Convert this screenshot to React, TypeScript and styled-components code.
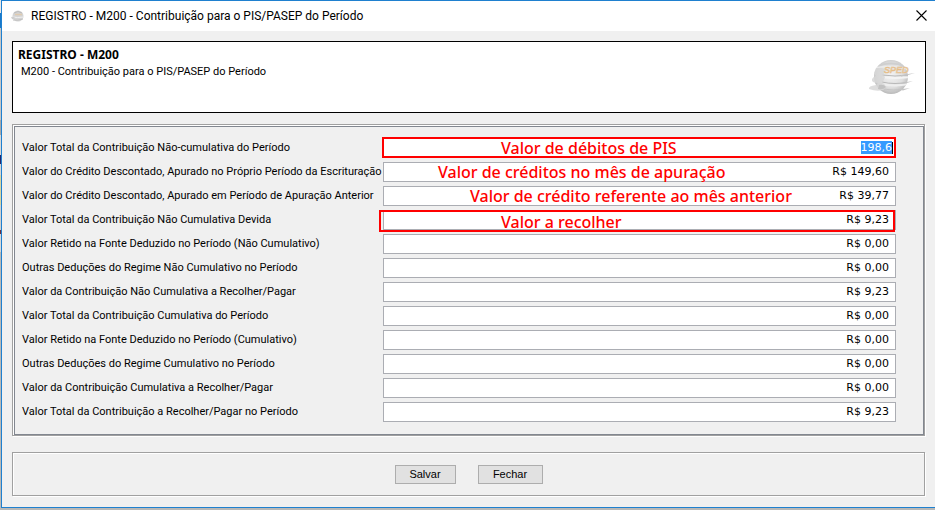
import React, { useEffect, useRef } from 'react';
import styled, { createGlobalStyle, css } from 'styled-components';

const GlobalStyle = createGlobalStyle`
  * { box-sizing: border-box; }
  body {
    margin: 0;
    background: #b9b9b7;
    font-family: Roboto, Arial, sans-serif;
    font-size: 11px;
    color: #000;
  }
`;

const Desktop = styled.div`
  padding: 0 0 2px 1px;
  background: linear-gradient(
      #e8e8e8 0 13px, #1979ca 13px 28px, #c6c6c6 28px 120px, #a8a8a8 120px 135px,
      #d8d8d8 135px 155px, #26276b 155px 164px, #d6d6d6 164px 175px, #d9d5a0 175px 205px,
      #d0d0d0 205px 230px, #6b3040 230px 234px, #d8d8d8 234px 252px, #b9b9b7 252px
    ) left top / 1px 100% no-repeat;
`;

const Window = styled.main`
  border: solid #1f80cf;
  border-width: 1px 0 1px 1px;
  background: #f0f0f0;
`;

const TitleBar = styled.header`
  display: flex;
  align-items: center;
  height: 30px;
  padding: 0 8px 1px;
  background: #fff;
`;

const Title = styled.h1`
  flex: 1;
  margin: 0 0 0 6px;
  font: 12px/16px Roboto, "Segoe UI", sans-serif;
`;

const CloseButton = styled.button`
  display: flex;
  padding: 0;
  border: 0;
  background: none;
`;

const Content = styled.div`
  display: flex;
  flex-direction: column;
  padding: 10px 9px 11px 10px;
`;

const Banner = styled.section`
  display: flex;
  justify-content: space-between;
  height: 72px;
  padding: 4px 9px 0 5px;
  border: 1px solid #000;
  background: #fff;
`;

const BannerTitle = styled.h2`
  margin: 0;
  font: bold 12px/17px "Noto Sans", Tahoma, sans-serif;
`;

const BannerText = styled.p`
  margin: 0 0 0 3px;
  line-height: 17px;
`;

const BannerLogo = styled.div`
  padding-top: 12px;
`;

const etched = css`
  margin-right: 1px;
  border: 1px solid #a0a0a0;
  box-shadow: 1px 1px 0 #fff, inset 1px 1px 0 #fff;
`;

const FormPanel = styled.section`
  ${etched}
  margin-top: 11px;
  padding: 1px 0 0 1px;
`;

const FormBody = styled.form`
  display: flex;
  flex-direction: column;
  gap: 4px;
  padding: 11px 27px 12px 7px;
  border: 1px solid #828790;
`;

const Row = styled.div`
  display: grid;
  grid-template-columns: 361px 1fr;
  align-items: center;
`;

const Label = styled.label`
  white-space: nowrap;
  line-height: 16px;
`;

const Field = styled.div`
  position: relative;
  display: flex;
`;

const ValueInput = styled.input<{ $active?: boolean }>`
  flex: 1;
  min-width: 0;
  height: 20px;
  padding: 0 ${p => (p.$active ? 3 : 6)}px 1px 4px;
  border: 1px solid #abadb3;
  border-radius: 0;
  outline: 0;
  background: #fff;
  font: 11px/12px "DejaVu Sans", Verdana, sans-serif;
  text-align: right;
  &::selection {
    color: #fff;
    background: rgba(51, 153, 255, 0.99);
  }
`;

const Caret = styled.span`
  position: absolute;
  top: 4px;
  right: 3px;
  width: 1px;
  height: 12px;
  background: #000;
`;

const Highlight = styled.span<{ $wide?: boolean }>`
  position: absolute;
  inset: ${p => (p.$wide ? '0 1px -2px -4px' : '-1px 0 0 -1px')};
  border: 2px solid #f00;
  pointer-events: none;
`;

const Note = styled.span<{ $left: number; $low?: boolean }>`
  position: absolute;
  top: ${p => (p.$low ? 1 : -1)}px;
  left: ${p => p.$left}px;
  color: #f00;
  font: 500 16px/22px "Noto Sans", "Segoe UI", sans-serif;
  white-space: nowrap;
  pointer-events: none;
`;

const Actions = styled.footer`
  ${etched}
  display: flex;
  justify-content: center;
  gap: 22px;
  margin-top: 16px;
  padding: 12px 0 11px;
`;

const Button = styled.button<{ $wide?: boolean }>`
  width: ${p => (p.$wide ? 65 : 61)}px;
  height: 19px;
  padding: 0;
  border: 1px solid #adadad;
  background: #e1e1e1;
  color: #000;
  font: 11px/17px "Liberation Sans", Arial, sans-serif;
`;

type NoteData = { text: string; left: number; low?: boolean };
type Entry = { label: string; value: string; note?: NoteData; box?: 'tight' | 'wide'; active?: boolean };

const entries: Entry[] = [
  { label: 'Valor Total da Contribuição Não-cumulativa do Período', value: '198,6', note: { text: 'Valor de débitos de PIS', left: 118 }, box: 'tight', active: true },
  { label: 'Valor do Crédito Descontado, Apurado no Próprio Período da Escrituração', value: 'R$ 149,60', note: { text: 'Valor de créditos no mês de apuração', left: 55 } },
  { label: 'Valor do Crédito Descontado, Apurado em Período de Apuração Anterior', value: 'R$ 39,77', note: { text: 'Valor de crédito referente ao mês anterior', left: 87 } },
  { label: 'Valor Total da Contribuição Não Cumulativa Devida', value: 'R$ 9,23', note: { text: 'Valor a recolher', left: 118, low: true }, box: 'wide' },
  { label: 'Valor Retido na Fonte Deduzido no Período (Não Cumulativo)', value: 'R$ 0,00' },
  { label: 'Outras Deduções do Regime Não Cumulativo no Período', value: 'R$ 0,00' },
  { label: 'Valor da Contribuição Não Cumulativa a Recolher/Pagar', value: 'R$ 9,23' },
  { label: 'Valor Total da Contribuição Cumulativa do Período', value: 'R$ 0,00' },
  { label: 'Valor Retido na Fonte Deduzido no Período (Cumulativo)', value: 'R$ 0,00' },
  { label: 'Outras Deduções do Regime Cumulativo no Período', value: 'R$ 0,00' },
  { label: 'Valor da Contribuição Cumulativa a Recolher/Pagar', value: 'R$ 0,00' },
  { label: 'Valor Total da Contribuição a Recolher/Pagar no Período', value: 'R$ 9,23' },
];

function SpedLogo() {
  return (
    <svg width="48" height="40" viewBox="0 0 48 40" aria-label="SPED" role="img">
      <defs>
        <radialGradient id="ball" cx="50%" cy="45%" r="56%">
          <stop offset="0" stopColor="#f2f2f2" />
          <stop offset="0.65" stopColor="#dfdfdf" />
          <stop offset="1" stopColor="#b8b8b8" />
        </radialGradient>
        <clipPath id="ballClip"><circle cx="23" cy="19" r="17" /></clipPath>
      </defs>
      <circle cx="23" cy="19" r="17" fill="url(#ball)" />
      <g clipPath="url(#ballClip)" fill="none">
        <path d="M9 8Q23 3 37 8" stroke="#cfcfcf" strokeWidth="2" />
        <path d="M6 10Q23 7 40 11" stroke="#ececec" strokeWidth="1.5" />
        <path d="M14 17Q26 19 42 17" stroke="#b8b8b8" />
        <path d="M14 19Q26 21 42 19" stroke="#f4f4f4" strokeWidth="2" />
        <path d="M14 24Q26 27 42 24" stroke="#b8b8b8" />
        <path d="M14 26Q26 29 42 26" stroke="#eee" strokeWidth="2" />
        <path d="M12 30Q25 34 40 30" stroke="#c4c4c4" />
      </g>
      <path d="M8 10Q16 9 18 13L15 17L17 19Q16 23 14 24L17 27Q18 31 15 32Q9 34 1 31Q0 28 8 27L10 25Q3 25 4 21Q6 18 8 18L6 15Z" fill="#d7d7d7" opacity="0.85" />
      <path d="M11 27Q16 26 18 29Q15 32 10 31Z" fill="#c2c2c2" />
      <path d="M33 17L47 15L40 17L33 18.5ZM33 25L45 23L39 25L33 26ZM31 31.5L42 30L35 32.5Z" fill="#c4c4c4" />
      <text x="16" y="15" fontFamily="Liberation Sans" fontSize="9" fontStyle="italic" fill="#ece6dc" stroke="#e6bd88" strokeWidth="0.6">SPED</text>
    </svg>
  );
}

function WindowIcon() {
  return (
    <svg width="15" height="14" viewBox="0 0 15 14" aria-hidden="true">
      <ellipse cx="8" cy="7" rx="5.5" ry="5.5" fill="#d4d4d4" />
      <path d="M4 4Q8 1 12 4" fill="none" stroke="#bcbcbc" />
      <path d="M2 8Q7 9 14 8" fill="none" stroke="#f0f0f0" />
      <path d="M5 5.5H12" stroke="#dfcbb0" strokeWidth="1.5" />
      <path d="M1 8Q4 7 5 9Q4 11 2 10Z" fill="#cfcfcf" />
      <path d="M3 11Q7 12 13 10" fill="none" stroke="#c2c2c2" />
    </svg>
  );
}

export default function App() {
  const activeInput = useRef<HTMLInputElement>(null);

  useEffect(() => {
    activeInput.current?.focus();
    activeInput.current?.select();
  }, []);

  return (
    <>
      <GlobalStyle />
      <Desktop>
        <Window>
          <TitleBar>
            <WindowIcon />
            <Title>REGISTRO - M200 - Contribuição para o PIS/PASEP do Período</Title>
            <CloseButton type="button" aria-label="Fechar janela">
              <svg width="11" height="11" viewBox="0 0 11 11" aria-hidden="true">
                <path d="M.5 .5L10.5 10.5M10.5 .5L.5 10.5" stroke="#000" strokeWidth="1.1" />
              </svg>
            </CloseButton>
          </TitleBar>
          <Content>
            <Banner>
              <div>
                <BannerTitle>REGISTRO - M200</BannerTitle>
                <BannerText>M200 - Contribuição para o PIS/PASEP do Período</BannerText>
              </div>
              <BannerLogo><SpedLogo /></BannerLogo>
            </Banner>
            <FormPanel>
              <FormBody id="registro" onSubmit={e => e.preventDefault()}>
                {entries.map((entry, i) => (
                  <Row key={entry.label}>
                    <Label htmlFor={`valor-${i}`}>{entry.label}</Label>
                    <Field>
                      <ValueInput
                        id={`valor-${i}`}
                        ref={entry.active ? activeInput : undefined}
                        $active={entry.active}
                        defaultValue={entry.value}
                      />
                      {entry.active && <Caret />}
                      {entry.note && <Note $left={entry.note.left} $low={entry.note.low}>{entry.note.text}</Note>}
                      {entry.box && <Highlight $wide={entry.box === 'wide'} />}
                    </Field>
                  </Row>
                ))}
              </FormBody>
            </FormPanel>
            <Actions>
              <Button type="submit" form="registro">Salvar</Button>
              <Button type="button" $wide>Fechar</Button>
            </Actions>
          </Content>
        </Window>
      </Desktop>
    </>
  );
}
